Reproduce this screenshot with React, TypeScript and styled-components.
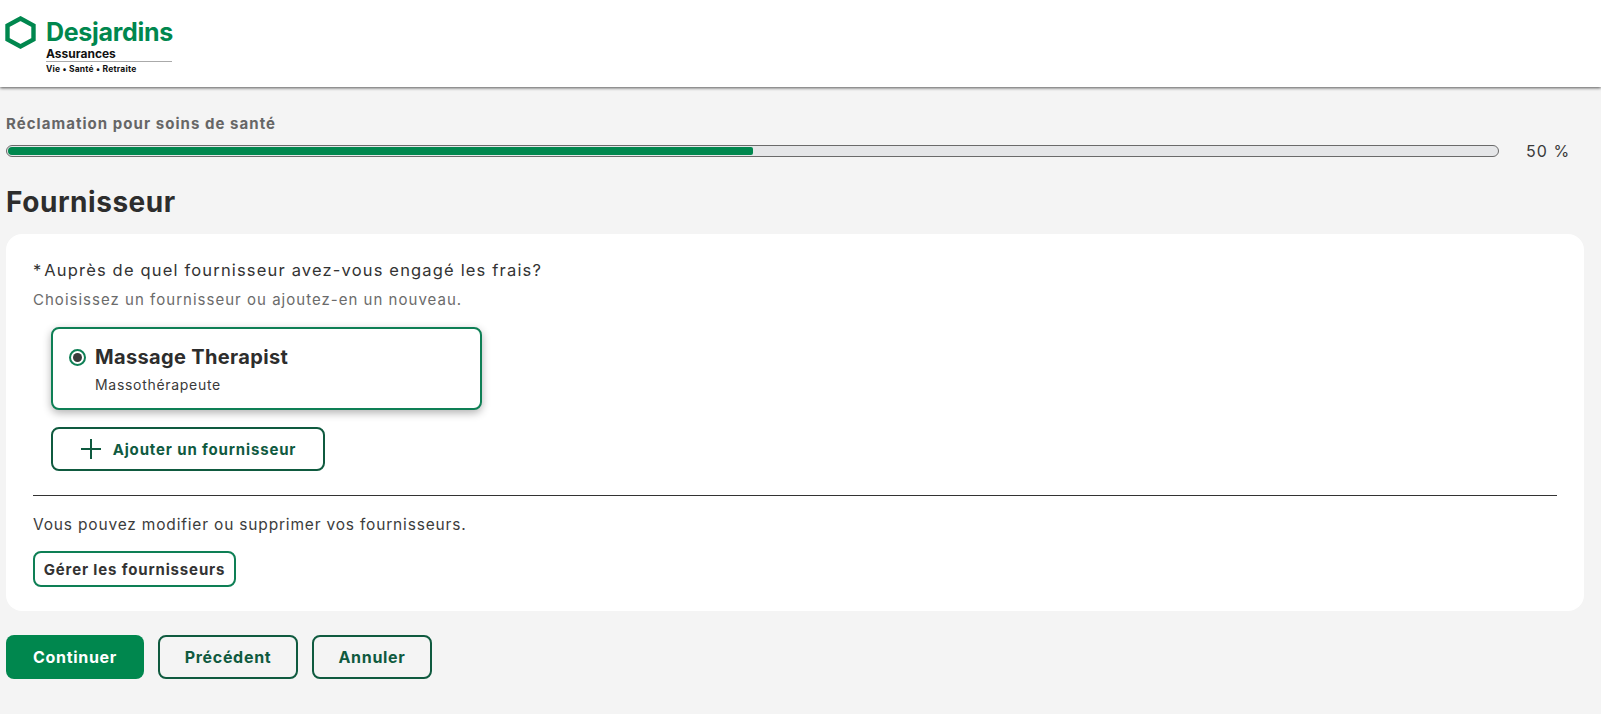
import React from "react";
import styled, { createGlobalStyle } from "styled-components";

const Global = createGlobalStyle`
  html, body { margin: 0; padding: 0; background: #f4f4f4; }
  body { font-family: Inter, "Open Sans", "Liberation Sans", sans-serif; color: #2f2f2f; }
  * { box-sizing: border-box; }
`;

const Page = styled.div`
  width: 1601px;
  height: 714px;
  overflow: hidden;
  background: #f4f4f4;
`;

const Header = styled.header`
  height: 87px;
  background: #fff;
  box-shadow: 0 1px 3px rgba(0, 0, 0, 0.65);
  padding: 16px 0 0 4px;
  display: flex;
  gap: 9px;
  align-items: flex-start;
`;

const LogoText = styled.div`
  width: 126px;
  margin-top: 2px;
`;

const Brand = styled.div`
  color: #00874e;
  font-size: 25px;
  font-weight: 700;
  line-height: 28px;
  letter-spacing: -0.3px;
`;

const Sub = styled.div`
  color: #111;
  font-size: 12px;
  font-weight: 700;
  line-height: 13px;
  margin-top: 1px;
  padding-bottom: 1px;
  border-bottom: 1px solid #aaa;
`;

const Tag = styled.div`
  color: #111;
  font-size: 8.5px;
  font-weight: 700;
  line-height: 12px;
  margin-top: 1px;
  letter-spacing: 0.2px;
`;

const Main = styled.main`
  padding: 28px 17px 0 6px;
`;

const ProgressLabel = styled.div`
  color: #666;
  font-size: 15px;
  font-weight: 700;
  line-height: 18px;
  letter-spacing: 1.05px;
`;

const ProgressRow = styled.div`
  display: flex;
  align-items: center;
  margin-top: 9px;
`;

const Track = styled.div`
  width: 1493px;
  height: 12px;
  border: 1px solid #6a6a6a;
  border-radius: 6px;
  background: #e5e6e8;
  padding: 1px;
`;

const Fill = styled.div`
  height: 100%;
  border-radius: 4px 2px 2px 4px;
  background: #00874e;
`;

const Percent = styled.div`
  margin-left: 27px;
  font-size: 16px;
  line-height: 18px;
  color: #3a3a3a;
  letter-spacing: 1.1px;
`;

const Title = styled.h1`
  margin: 24px 0 0;
  font-size: 28px;
  line-height: 36px;
  font-weight: 700;
  letter-spacing: 0.55px;
  color: #2d2d2d;
`;

const Card = styled.section`
  margin-top: 14px;
  height: 377px;
  background: #fff;
  border-radius: 16px;
  padding: 24px 27px 0 27px;
`;

const Question = styled.div`
  font-size: 16.5px;
  line-height: 24px;
  color: #333;
  letter-spacing: 1.17px;
`;

const Required = styled.span`
  margin-right: 3px;
  letter-spacing: 0;
`;

const Hint = styled.div`
  margin-top: 8px;
  font-size: 15px;
  line-height: 20px;
  color: #6b6b6b;
  letter-spacing: 1.02px;
`;

const Option = styled.div`
  margin: 17px 0 0 18px;
  width: 431px;
  height: 83px;
  border: 2px solid #0e7f55;
  border-radius: 8px;
  background: #fff;
  box-shadow: 0 3px 8px rgba(0, 0, 0, 0.3);
  padding: 16px 0 0 16px;
`;

const OptionHead = styled.div`
  display: flex;
  align-items: center;
  gap: 9px;
`;

const RadioMark = styled.span`
  width: 17px;
  height: 17px;
  border: 2px solid #0e7f55;
  border-radius: 50%;
  display: flex;
  align-items: center;
  justify-content: center;
  &::after {
    content: "";
    width: 9px;
    height: 9px;
    border-radius: 50%;
    background: #3a3a3a;
  }
`;

const OptionName = styled.div`
  font-size: 20px;
  font-weight: 700;
  line-height: 24px;
  color: #2d2d2d;
  letter-spacing: 0.35px;
`;

const OptionSub = styled.div`
  margin: 7px 0 0 26px;
  font-size: 14px;
  line-height: 18px;
  color: #3a3a3a;
  letter-spacing: 0.7px;
`;

const OutlineButton = styled.button<{ $w: number; $h?: number; $dark?: boolean }>`
  width: ${(p) => p.$w}px;
  height: ${(p) => p.$h ?? 44}px;
  border: 2px solid ${(p) => (p.$dark ? "#0f5a3f" : "#0e7f55")};
  border-radius: 8px;
  background: transparent;
  color: ${(p) => (p.$dark ? "#0f5a3f" : "#333")};
  font-family: inherit;
  font-weight: 700;
  font-size: 15px;
  letter-spacing: 0.85px;
  display: inline-flex;
  align-items: center;
  justify-content: center;
  padding: 0;
`;

const AddButton = styled(OutlineButton)`
  margin: 17px 0 0 18px;
  gap: 11px;
  display: flex;
  background: #fff;
`;

const Divider = styled.hr`
  margin: 24px 0 0;
  border: 0;
  border-top: 1px solid #333;
`;

const Note = styled.div`
  margin-top: 17px;
  font-size: 15.5px;
  line-height: 24px;
  color: #3c3c3c;
  letter-spacing: 0.82px;
`;

const ManageButton = styled(OutlineButton)`
  margin-top: 14px;
  display: flex;
`;

const Actions = styled.div`
  display: flex;
  gap: 14px;
  margin-top: 24px;
`;

const PrimaryButton = styled.button`
  width: 138px;
  height: 44px;
  border: 0;
  border-radius: 8px;
  background: #00874e;
  color: #fff;
  font-family: inherit;
  font-size: 16px;
  font-weight: 700;
  letter-spacing: 0.7px;
`;

const ActionButton = styled(OutlineButton)`
  font-size: 16px;
  letter-spacing: 0.7px;
`;

export default function App() {
  return (
    <Page>
      <Global />
      <Header>
        <svg width="33" height="33" viewBox="0 0 33 33" aria-hidden="true">
          <path d="M16.5 2.5 L29.5 9.5 V23.5 L16.5 30.5 L3.5 23.5 V9.5 Z" fill="none" stroke="#00874e" strokeWidth="4.4" />
        </svg>
        <LogoText>
          <Brand>Desjardins</Brand>
          <Sub>Assurances</Sub>
          <Tag>Vie • Santé • Retraite</Tag>
        </LogoText>
      </Header>
      <Main>
        <ProgressLabel>Réclamation pour soins de santé</ProgressLabel>
        <ProgressRow>
          <Track>
            <Fill style={{ width: "50%" }} />
          </Track>
          <Percent>50 %</Percent>
        </ProgressRow>
        <Title>Fournisseur</Title>
        <Card>
          <Question><Required>*</Required>Auprès de quel fournisseur avez-vous engagé les frais?</Question>
          <Hint>Choisissez un fournisseur ou ajoutez-en un nouveau.</Hint>
          <Option>
            <OptionHead>
              <RadioMark />
              <OptionName>Massage Therapist</OptionName>
            </OptionHead>
            <OptionSub>Massothérapeute</OptionSub>
          </Option>
          <AddButton $w={274} $dark>
            <svg width="22" height="22" viewBox="0 0 22 22" aria-hidden="true">
              <path d="M11 1 V21 M1 11 H21" stroke="#0f5a3f" strokeWidth="2" fill="none" />
            </svg>
            Ajouter un fournisseur
          </AddButton>
          <Divider />
          <Note>Vous pouvez modifier ou supprimer vos fournisseurs.</Note>
          <ManageButton $w={203} $h={36}>Gérer les fournisseurs</ManageButton>
        </Card>
        <Actions>
          <PrimaryButton>Continuer</PrimaryButton>
          <ActionButton $w={140} $dark>Précédent</ActionButton>
          <ActionButton $w={120} $dark>Annuler</ActionButton>
        </Actions>
      </Main>
    </Page>
  );
}
